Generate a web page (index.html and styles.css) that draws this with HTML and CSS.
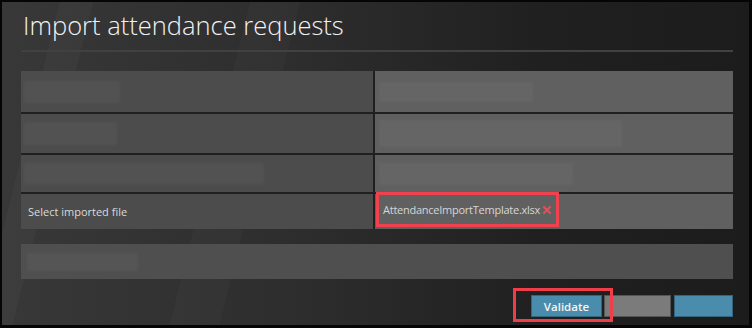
FILE: index.html
```html
<!DOCTYPE html>
<html>
<head>
    <meta charset="utf-8" />
    <title>Import attendance requests</title>
    <link rel="stylesheet" href="styles.css">
</head>
<body>
    <div class="window">
        <h1 class="title">Import attendance requests</h1>

        <div class="form-grid">
            <div class="cell label"><span class="blur" style="width:96px;height:22px"></span></div>
            <div class="cell value"><span class="blur" style="width:154px;height:20px"></span></div>

            <div class="cell label"><span class="blur" style="width:93px;height:23px"></span></div>
            <div class="cell value"><span class="blur" style="width:243px;height:27px"></span></div>

            <div class="cell label"><span class="blur" style="width:240px;height:21px"></span></div>
            <div class="cell value"><span class="blur" style="width:194px;height:22px"></span></div>

            <div class="cell label"><span class="label-text">Select imported file</span></div>
            <div class="cell value file-cell">
                <span class="file-chip">
                    AttendanceImportTemplate.xlsx
                    <svg class="remove" width="8" height="8" viewBox="0 0 8 8">
                        <path d="M1 1 L7 7 M7 1 L1 7" stroke="#e2505c" stroke-width="2" stroke-linecap="square" />
                    </svg>
                </span>
            </div>
        </div>

        <div class="note-bar"><span class="blur" style="width:111px;height:18px"></span></div>

        <div class="actions">
            <button class="btn btn-blue btn-validate">Validate</button>
            <button class="btn btn-gray"></button>
            <button class="btn btn-blue btn-last"></button>
            <div class="highlight"></div>
        </div>
    </div>
</body>
</html>
```

FILE: styles.css
```css
html, body {
    margin: 0;
    padding: 0;
    background: #050505;
}
body {
    width: 752px;
    height: 328px;
    overflow: hidden;
    font-family: "Open Sans", "Noto Sans", sans-serif;
}
.window {
    margin: 2px 3px 3px 2px;
    height: 323px;
    box-sizing: border-box;
    padding: 0 16px 0 19px;
    background:
        linear-gradient(104deg, transparent 7%, rgba(255,255,255,0.025) 7%, rgba(255,255,255,0.025) 11%, transparent 11%),
        linear-gradient(104deg, transparent 30%, rgba(255,255,255,0.018) 30%, rgba(255,255,255,0.018) 36%, transparent 36%),
        linear-gradient(90deg, #383838 0%, #2d2d2d 40%, #202020 72%, #1c1c1c 100%);
}
.title {
    margin: 0;
    padding: 8px 0 10px 2px;
    font-size: 25.5px;
    line-height: 30px;
    font-weight: 300;
    color: #f2f2f2;
    border-bottom: 2px solid #414141;
}
.form-grid {
    margin-top: 19px;
    display: grid;
    grid-template-columns: 352px 358px;
    grid-template-rows: 41px 39px 37px 35px;
    gap: 2px;
    background: #202020;
}
.cell {
    display: flex;
    align-items: center;
}
.label {
    background: #4c4c4c;
    padding-left: 3px;
}
.value {
    background: #606060;
    padding-left: 4px;
}
.blur {
    display: block;
    background: rgba(255,255,255,0.035);
    filter: blur(1.5px);
}
.label-text {
    padding-left: 4px;
    font-size: 11px;
    color: #dadada;
}
.file-cell {
    padding-left: 1px;
    align-items: stretch;
}
.file-chip {
    display: flex;
    align-items: center;
    gap: 3px;
    margin: -2px 0 2px 0;
    padding: 0 5px 0 4px;
    border: 3px solid #f0424e;
    font-size: 11px;
    letter-spacing: -0.25px;
    color: #d6d6d6;
}
.remove {
    display: block;
    margin-top: 1px;
}
.note-bar {
    margin-top: 15px;
    height: 35px;
    background: #4f4f4f;
    display: flex;
    align-items: center;
    padding-left: 6px;
}
.actions {
    position: relative;
    margin-top: 16px;
    display: flex;
    justify-content: flex-end;
    height: 22px;
}
.btn {
    height: 22px;
    padding: 0;
    border: 1px solid #2b2b2b;
    font-family: "Open Sans", "Noto Sans", sans-serif;
    font-size: 11.5px;
    font-weight: 600;
    color: #f4f4f4;
}
.btn-blue {
    background: #4a8cab;
    border-color: #33657d;
}
.btn-validate {
    width: 71px;
    margin-right: 2px;
}
.btn-gray {
    width: 67px;
    margin-right: 3px;
    background: #7b7b7b;
    border-color: #555;
}
.btn-last {
    width: 59px;
}
.highlight {
    position: absolute;
    top: -7px;
    right: 120px;
    width: 100px;
    height: 34px;
    box-sizing: border-box;
    border: 3px solid #ef3e4a;
}
```
